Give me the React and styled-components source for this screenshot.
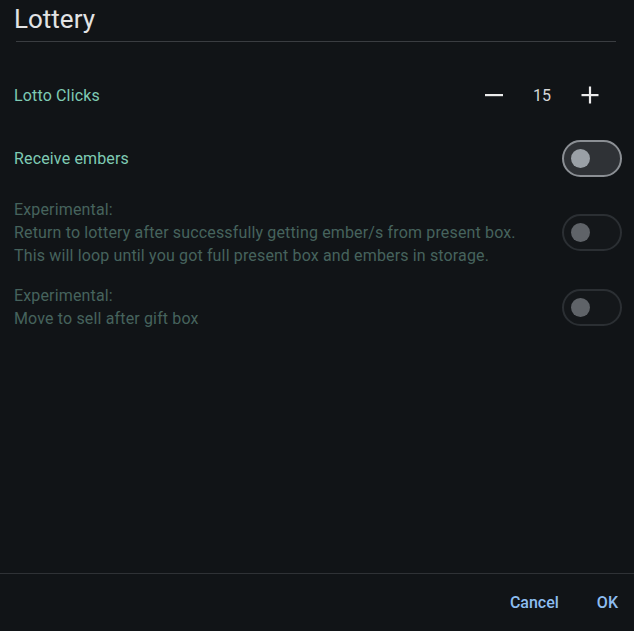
import React from "react";
import styled, { createGlobalStyle } from "styled-components";

const GlobalStyle = createGlobalStyle`
  html, body {
    margin: 0;
    padding: 0;
    background: #111417;
  }
  body {
    font-family: Roboto, "Liberation Sans", sans-serif;
  }
`;

const Dialog = styled.div`
  display: flex;
  flex-direction: column;
  height: 631px;
  background: #111417;
`;

const Header = styled.header`
  padding: 0 18px 0 14px;
`;

const Title = styled.h1`
  margin: 2px 0 0;
  font-size: 26px;
  line-height: 34px;
  font-weight: 400;
  color: #e2e3e4;
`;

const Divider = styled.div`
  margin: 5px 0 0 2px;
  height: 1px;
  background: #3a3d41;
`;

const Content = styled.main`
  flex: 1;
  display: flex;
  flex-direction: column;
  gap: 17px;
  padding: 30px 12px 0 14px;
`;

const Row = styled.div`
  display: flex;
  align-items: center;
  justify-content: space-between;
  min-height: 46px;
`;

const Label = styled.div`
  font-size: 16px;
  line-height: 23px;
  letter-spacing: 0.15px;
  color: ${(p) => (p.$disabled ? "#46635d" : "#7fcbb4")};
`;

const Stepper = styled.div`
  display: flex;
  align-items: center;
  margin-right: 12px;
`;

const IconButton = styled.button`
  width: 40px;
  height: 40px;
  display: flex;
  align-items: center;
  justify-content: center;
  padding: 0;
  border: none;
  background: none;
  color: #ececec;
`;

const Value = styled.span`
  width: 56px;
  text-align: center;
  font-size: 16px;
  color: #d6d7d8;
`;

const Track = styled.div`
  box-sizing: border-box;
  width: 60px;
  height: 37px;
  border-radius: 19px;
  display: flex;
  align-items: center;
  padding-left: 7px;
  flex-shrink: 0;
  border: 2px solid ${(p) => (p.$disabled ? "#2b2f33" : "#8b8f94")};
  background: ${(p) => (p.$disabled ? "#14171a" : "#2f3236")};
`;

const Thumb = styled.div`
  width: 19px;
  height: 19px;
  border-radius: 50%;
  background: ${(p) => (p.$disabled ? "#5f6368" : "#9aa0a6")};
`;

const Footer = styled.footer`
  height: 57px;
  border-top: 1px solid #2f3236;
  display: flex;
  align-items: center;
  justify-content: flex-end;
  gap: 22px;
  padding: 0 8px;
`;

const TextButton = styled.button`
  padding: 0 8px;
  border: none;
  background: none;
  font-family: Roboto, "Liberation Sans", sans-serif;
  font-size: 16px;
  font-weight: 500;
  color: #8dbdf0;
`;

const Minus = () => (
  <svg width="18" height="18" viewBox="0 0 18 18">
    <rect x="0" y="8" width="18" height="2.2" fill="currentColor" />
  </svg>
);

const Plus = () => (
  <svg width="18" height="18" viewBox="0 0 18 18">
    <rect x="0.5" y="8" width="17" height="2.2" fill="currentColor" />
    <rect x="7.9" y="0.5" width="2.2" height="17" fill="currentColor" />
  </svg>
);

const Toggle = ({ disabled }) => (
  <Track $disabled={disabled}>
    <Thumb $disabled={disabled} />
  </Track>
);

export default function App() {
  return (
    <>
      <GlobalStyle />
      <Dialog>
        <Header>
          <Title>Lottery</Title>
          <Divider />
        </Header>
        <Content>
          <Row>
            <Label>Lotto Clicks</Label>
            <Stepper>
              <IconButton>
                <Minus />
              </IconButton>
              <Value>15</Value>
              <IconButton>
                <Plus />
              </IconButton>
            </Stepper>
          </Row>
          <Row>
            <Label>Receive embers</Label>
            <Toggle />
          </Row>
          <Row>
            <Label $disabled>
              Experimental:
              <br />
              Return to lottery after successfully getting ember/s from present box.
              <br />
              This will loop until you got full present box and embers in storage.
            </Label>
            <Toggle disabled />
          </Row>
          <Row>
            <Label $disabled>
              Experimental:
              <br />
              Move to sell after gift box
            </Label>
            <Toggle disabled />
          </Row>
        </Content>
        <Footer>
          <TextButton>Cancel</TextButton>
          <TextButton>OK</TextButton>
        </Footer>
      </Dialog>
    </>
  );
}
